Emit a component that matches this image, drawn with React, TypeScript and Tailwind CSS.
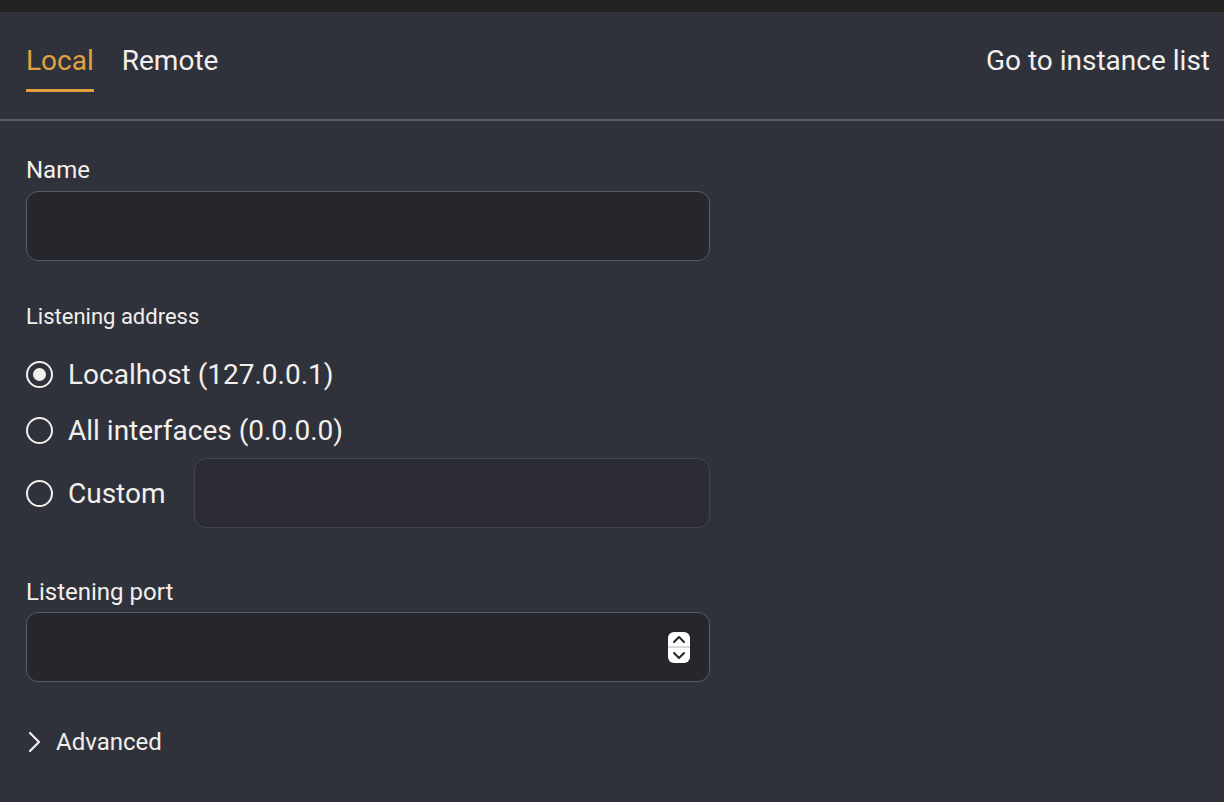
import { useState } from "react";

function Radio({ checked }: { checked: boolean }) {
  return (
    <span className="flex h-[27px] w-[27px] shrink-0 items-center justify-center rounded-full border-2 border-[#f2efec]">
      {checked && <span className="h-[13px] w-[13px] rounded-full bg-[#f2efec]" />}
    </span>
  );
}

function Spinner() {
  return (
    <div className="flex h-[31px] w-[22px] flex-col items-center justify-between rounded-[6px] bg-white py-[3px]">
      <svg width="14" height="9" viewBox="0 0 14 9" fill="none">
        <path d="M2 7l5-5 5 5" stroke="#26272c" strokeWidth="2" strokeLinecap="round" strokeLinejoin="round" />
      </svg>
      <div className="h-[2px] w-full bg-[#d9d9d9]" />
      <svg width="14" height="9" viewBox="0 0 14 9" fill="none">
        <path d="M2 2l5 5 5-5" stroke="#26272c" strokeWidth="2" strokeLinecap="round" strokeLinejoin="round" />
      </svg>
    </div>
  );
}

export default function App() {
  const [tab, setTab] = useState("local");
  const [address, setAddress] = useState("localhost");

  const options = [
    { id: "localhost", label: "Localhost (127.0.0.1)" },
    { id: "all", label: "All interfaces (0.0.0.0)" },
  ];

  return (
    <div
      className="min-h-[802px] bg-[#30323b] text-[#f2efec]"
      style={{ fontFamily: "Roboto, 'Noto Sans', sans-serif" }}
    >
      <div className="h-3 bg-[#222221]" />

      {/* tabs */}
      <div className="flex h-[109px] items-start justify-between border-b-2 border-[#5c5d62] pl-[26px] pr-[14px]">
        <div className="flex gap-[28px] pt-[32px]">
          <button
            onClick={() => setTab("local")}
            className={`border-b-[3px] pb-[12px] text-[28px] leading-[33px] ${
              tab === "local" ? "border-[#e0a23f] text-[#e0a23f]" : "border-transparent"
            }`}
          >
            Local
          </button>
          <button
            onClick={() => setTab("remote")}
            className={`border-b-[3px] pb-[12px] text-[28px] leading-[33px] ${
              tab === "remote" ? "border-[#e0a23f] text-[#e0a23f]" : "border-transparent"
            }`}
          >
            Remote
          </button>
        </div>
        <button className="pt-[32px] text-[28px] leading-[33px]">Go to instance list</button>
      </div>

      <div className="w-[710px] pl-[26px]">
        {/* name */}
        <div className="pt-[35px] text-[24px] leading-[28px]">Name</div>
        <div className="mt-[7px] h-[70px] rounded-[12px] border border-[#5b5c61] bg-[#26272c]" />

        {/* listening address */}
        <div className="mt-[43px] text-[22px] leading-[26px]">Listening address</div>
        <div className="mt-[16px] flex flex-col">
          {options.map((o) => (
            <label
              key={o.id}
              onClick={() => setAddress(o.id)}
              className="flex h-[56px] cursor-pointer items-center gap-[15px] text-[28px] leading-[33px]"
            >
              <Radio checked={address === o.id} />
              {o.label}
            </label>
          ))}
          <div className="flex items-center">
            <label
              onClick={() => setAddress("custom")}
              className="flex w-[168px] cursor-pointer items-center gap-[15px] text-[28px] leading-[33px]"
            >
              <Radio checked={address === "custom"} />
              Custom
            </label>
            <div className="h-[70px] flex-1 rounded-[12px] border border-[#44454b] bg-[#2b2c33]" />
          </div>
        </div>

        {/* listening port */}
        <div className="mt-[50px] text-[24px] leading-[28px]">Listening port</div>
        <div className="mt-[6px] flex h-[70px] items-center justify-end rounded-[12px] border border-[#5b5c61] bg-[#26272c] pr-[19px]">
          <Spinner />
        </div>

        {/* advanced */}
        <div className="mt-[46px] flex items-center gap-[12px] text-[24px] leading-[28px]">
          <svg width="18" height="22" viewBox="0 0 18 22" fill="none">
            <path d="M4 2l9 9-9 9" stroke="#f2efec" strokeWidth="2.2" strokeLinecap="round" strokeLinejoin="round" />
          </svg>
          Advanced
        </div>
      </div>
    </div>
  );
}
